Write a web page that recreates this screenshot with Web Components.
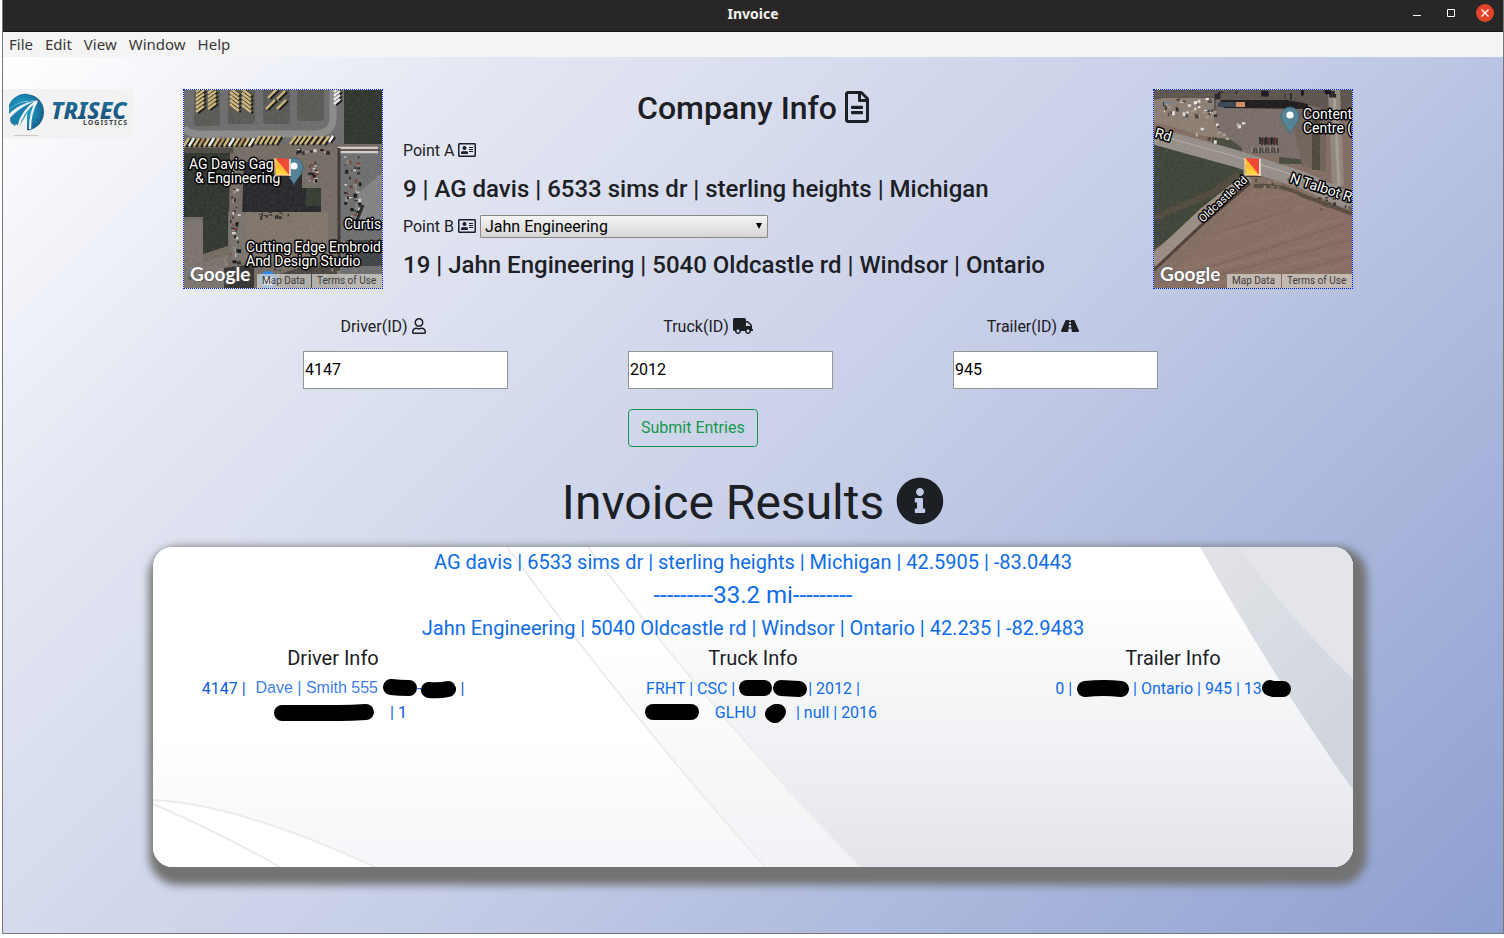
<!DOCTYPE html>
<html lang="en">
<head>
<meta charset="utf-8">
<title>Invoice</title>
<style>
  html, body { margin: 0; background: #fff; }
  body { font: 16px/24px Roboto, sans-serif; color: #1c2024; }
</style>
</head>
<body>
<invoice-app></invoice-app>

<script>
const define = (name, html, after) => {
  const tpl = document.createElement('template');
  tpl.innerHTML = html;
  customElements.define(name, class extends HTMLElement {
    constructor() {
      super();
      this.attachShadow({ mode: 'open' }).append(tpl.content.cloneNode(true));
    }
    connectedCallback() { if (after) after(this, this.shadowRoot); }
  });
};

/* ---------- icons ---------- */
const ICONS = {
  file: [384, 'M288 248v28c0 6.600-5.400 12-12 12H108c-6.600 0-12-5.400-12-12v-28c0-6.600 5.400-12 12-12h168c6.600 0 12 5.400 12 12zm-12 72H108c-6.600 0-12 5.400-12 12v28c0 6.600 5.400 12 12 12h168c6.600 0 12-5.400 12-12v-28c0-6.600-5.400-12-12-12zm108-188.100V464c0 26.500-21.500 48-48 48H48c-26.500 0-48-21.500-48-48V48C0 21.500 21.500 0 48 0h204.100C264.800 0 277 5.100 286 14.100L369.900 98c9 8.900 14.100 21.200 14.100 33.900zm-128-80V128h76.100L256 51.900zM336 464V176H232c-13.300 0-24-10.700-24-24V48H48v416h288z'],
  card: [576, 'M528 32H48C21.500 32 0 53.500 0 80v352c0 26.500 21.500 48 48 48h480c26.500 0 48-21.500 48-48V80c0-26.500-21.500-48-48-48zm0 400H48V80h480v352zM208 256c35.300 0 64-28.700 64-64s-28.700-64-64-64-64 28.700-64 64 28.700 64 64 64zm-89.600 128h179.200c12.400 0 22.400-8.600 22.400-19.200v-19.200c0-31.800-30.100-57.600-67.200-57.600-10.800 0-18.700 8-44.800 8-26.900 0-33.400-8-44.800-8-37.100 0-67.200 25.800-67.200 57.600v19.200c0 10.600 10 19.200 22.400 19.200zM360 320h112c4.400 0 8-3.600 8-8v-16c0-4.400-3.600-8-8-8H360c-4.400 0-8 3.600-8 8v16c0 4.400 3.600 8 8 8zm0-64h112c4.400 0 8-3.600 8-8v-16c0-4.400-3.600-8-8-8H360c-4.400 0-8 3.600-8 8v16c0 4.400 3.600 8 8 8zm0-64h112c4.400 0 8-3.600 8-8v-16c0-4.400-3.600-8-8-8H360c-4.400 0-8 3.600-8 8v16c0 4.400 3.600 8 8 8z'],
  user: [448, 'M313.600 304c-28.700 0-42.500 16-89.600 16-47.100 0-60.800-16-89.600-16C60.200 304 0 364.200 0 438.400V464c0 26.500 21.500 48 48 48h352c26.500 0 48-21.500 48-48v-25.600c0-74.200-60.200-134.400-134.400-134.400zM400 464H48v-25.600c0-47.600 38.800-86.400 86.400-86.400 14.600 0 38.300 16 89.600 16 51.700 0 74.900-16 89.600-16 47.600 0 86.400 38.800 86.400 86.400V464zM224 288c79.500 0 144-64.500 144-144S303.500 0 224 0 80 64.500 80 144s64.500 144 144 144zm0-240c52.900 0 96 43.100 96 96s-43.100 96-96 96-96-43.100-96-96 43.100-96 96-96z'],
  truck: [640, 'M624 352h-16V243.900c0-12.700-5.100-24.900-14.100-33.900L494 110.100c-9-9-21.200-14.100-33.900-14.100H416V48c0-26.500-21.500-48-48-48H48C21.500 0 0 21.500 0 48v320c0 26.500 21.500 48 48 48h16c0 53 43 96 96 96s96-43 96-96h128c0 53 43 96 96 96s96-43 96-96h48c8.800 0 16-7.200 16-16v-32c0-8.800-7.200-16-16-16zM160 464c-26.500 0-48-21.500-48-48s21.500-48 48-48 48 21.500 48 48-21.500 48-48 48zm320 0c-26.500 0-48-21.500-48-48s21.500-48 48-48 48 21.500 48 48-21.500 48-48 48zm80-208H416V144h44.100l99.900 99.900V256z'],
  road: [576, 'M573.190 402.670l-139.790-320C428.430 71.290 417.600 64 405.680 64h-97.450l2.450 23.160c.5 4.720-3.210 8.840-8 8.840h-29.160c-4.790 0-8.490-4.120-7.990-8.840L267.950 64h-97.640c-11.900 0-22.750 7.290-27.720 18.670l-139.780 320C-6.480 423.810 7.910 448 30.530 448h196.840l10.310-97.680c.86-8.140 7.720-14.320 15.910-14.320h68.800c8.190 0 15.050 6.180 15.910 14.320L348.620 448h196.840c22.620 0 37.010-24.190 27.730-45.330zM260.400 135.160a8 8 0 0 1 7.960-7.160h39.290c4.090 0 7.530 3.090 7.960 7.160l4.600 43.580c.75 7.090-4.810 13.260-11.930 13.260h-40.540c-7.130 0-12.680-6.170-11.930-13.260l4.590-43.580zM315.640 304h-55.290c-9.500 0-16.910-8.230-15.910-17.680l5.070-48c.86-8.140 7.720-14.320 15.910-14.320h45.150c8.190 0 15.050 6.180 15.910 14.320l5.070 48c1 9.450-6.410 17.680-15.910 17.680z'],
  info: [512, 'M256 8C119.043 8 8 119.083 8 256c0 136.997 111.043 248 248 248s248-111.003 248-248C504 119.083 392.957 8 256 8zm0 110c23.196 0 42 18.804 42 42s-18.804 42-42 42-42-18.804-42-42 18.804-42 42-42zm56 254c0 6.627-5.373 12-12 12h-88c-6.627 0-12-5.373-12-12v-24c0-6.627 5.373-12 12-12h12v-64h-12c-6.627 0-12-5.373-12-12v-24c0-6.627 5.373-12 12-12h64c6.627 0 12 5.373 12 12v100h12c6.627 0 12 5.373 12 12v24z']
};
define('fa-icon', `<style>
  :host { display: inline-block; height: 1em; vertical-align: -0.125em; line-height: 1; }
  svg { display: block; height: 1em; fill: currentColor; }
</style><svg aria-hidden="true"><path/></svg>`, (el, root) => {
  const [w, d] = ICONS[el.getAttribute('name')];
  root.querySelector('svg').setAttribute('viewBox', `0 0 ${w} 512`);
  root.querySelector('path').setAttribute('d', d);
});

/* ---------- window chrome ---------- */
define('title-bar', `<style>
  :host { display: grid; grid-template-columns: 1fr auto 1fr; align-items: center; height: 31px; background: #282627; border-bottom: 1px solid #161515; color: #fff; }
  b { grid-column: 2; font: 700 14px/28px "Noto Sans", sans-serif; padding-bottom: 3px; color: #f4f2ee; }
  div { display: flex; justify-content: flex-end; gap: 16px; padding: 0 9px 6px 0; }
  button { width: 18px; height: 18px; padding: 0; border: 0; background: none; border-radius: 9px; }
  .close { background: #e2432a; }
  svg { display: block; }
</style>
<b>Invoice</b>
<div>
  <button aria-label="Minimize"><svg width="18" height="18"><path d="M5 11.500h8" stroke="#fff"/></svg></button>
  <button aria-label="Maximize"><svg width="18" height="18"><path d="M5.500 5.500h7v7h-7z" fill="none" stroke="#fff"/></svg></button>
  <button class="close" aria-label="Close"><svg width="18" height="18"><path d="M5.500 5.500l7 7m0-7l-7 7" stroke="#fff" stroke-width="1.300"/></svg></button>
</div>`);

define('menu-bar', `<style>
  :host { display: block; background: #f4f4f4; }
  nav { display: flex; gap: 12px; padding: 0 6px; height: 25px; }
  button { border: 0; background: none; padding: 0; font: 15px/25px "Noto Sans", sans-serif; color: #3a3836; }
</style><nav><button>File</button><button>Edit</button><button>View</button><button>Window</button><button>Help</button></nav>`);

define('trisec-logo', `<style>
  :host { display: block; width: 130px; height: 50px; flex: none; background: #f2f2f2; }
  svg { display: block; }
</style>
<svg width="130" height="50" viewBox="0 0 130 50" role="img" aria-label="Trisec Logistics">
  <defs>
    <radialGradient id="g" cx="40%" cy="45%" r="65%"><stop offset="0" stop-color="#2bb0d2"/><stop offset=".55" stop-color="#1a86b2"/><stop offset="1" stop-color="#175680"/></radialGradient>
    <linearGradient id="t" x2="0" y2="1"><stop offset="0" stop-color="#1e78a3"/><stop offset="1" stop-color="#17486f"/></linearGradient>
  </defs>
  <path d="M6 16C10 8 17 4 24 5c10 1 17 8 17 18 0 9-6 16-14 18-4 1-8 0-11-2C9 37 6 30 6 23z" fill="url(#g)"/>
  <path d="M3 22C13 14 22 11 33 12 21 16 12 22 3 34z" fill="#f2f2f2"/>
  <path d="M6 20C14 14 22 12 31 12 20 14 12 19 6 25z" fill="#1a86b2"/>
  <path d="M3 36L8 30 16 38 24 24 24 42 8 43z" fill="#f2f2f2"/>
  <path d="M7 31C14 22 22 16 33 12 24 18 17 26 12 37l-4-3z" fill="#1d7ea9"/>
  <path d="M34 12C24 18 18 26 15 39M34 12C29 20 27 29 27 40" fill="none" stroke="#f2f2f2" stroke-width="2.200"/>
  <path d="M11 46.500h24" stroke="#c9c9c9"/>
  <text x="48" y="30" font-family="Noto Sans, sans-serif" font-weight="800" font-style="italic" font-size="23" fill="url(#t)">TRISEC</text>
  <text x="80" y="36" font-family="Noto Sans, sans-serif" font-weight="700" font-size="7" letter-spacing="1" fill="#444">LOGISTICS</text>
</svg>`);

/* ---------- satellite maps ---------- */
const bar = (x, y, dx, dy, c, w = 2.4) =>
  `<path d="M${x + 2} ${y + 1}l${dx} ${dy}" stroke="#15140f" stroke-width="${w}"/><path d="M${x} ${y}l${dx} ${dy}" stroke="${c}" stroke-width="${w}"/>`;
const row = (n, x, y, sx, sy, dx, dy, c, w) =>
  Array.from({ length: n }, (_, i) => bar(x + i * sx, y + i * sy, dx, dy, Array.isArray(c) ? c[i % c.length] : c, w)).join('');
let seed = 7;
const rnd = () => (seed = (seed * 16807) % 2147483647) / 2147483647;
const specks = (n, x, y, w, h, cols, s = 3) =>
  Array.from({ length: n }, () => `<rect x="${(x + rnd() * w).toFixed(1)}" y="${(y + rnd() * h).toFixed(1)}" width="${(1 + rnd() * s).toFixed(1)}" height="${(1 + rnd() * s).toFixed(1)}" fill="${cols[Math.floor(rnd() * cols.length)]}"/>`).join('');
const tan = '#cfb679', cars = ['#1d1c1b', '#d6d2cb', '#2d2b2a', '#8d8a86', '#7c3c33', '#111'];
const pin = (x, y) => `<path d="M${x} ${y + 18}c-2-6-9-10-9-18a9 9 0 0 1 18 0c0 8-7 12-9 18z" fill="#568497" stroke="#35606f" stroke-width=".6"/><circle cx="${x}" cy="${y - 1}" r="3.600" fill="#fff"/>`;
const flag = `<path d="M91 69h16v18H92z" fill="#222" opacity=".7"/><path d="M91 68l15 1v17l-14-1z" fill="#ef4a35"/><path d="M91 68l14 17-13 0z" fill="#ffd43c"/><path d="M91 68l13 15-12-5z" fill="#ffad2e" opacity=".6"/><path d="M106 69v17" stroke="#fff" stroke-width="1.500"/><path d="M91 85h15M91 68v17" stroke="#ffe9b0" stroke-width="1"/>`;
const SCENES = {
  a: () => `<rect width="198" height="198" fill="#6f685e"/>
    <path d="M160 0h38v54H160zM0 60h46l-1 67H0z" fill="#2a3028"/><path d="M0 0h160v54H0z" fill="#6b6a6a"/>
    <path d="M0 38Q6 45 20 44h110q17 0 19-14V0" fill="none" stroke="#8a8988" stroke-width="7"/>
    <g fill="#565552"><rect x="10" y="-4" width="26" height="40" rx="3"/><rect x="44" y="-4" width="27" height="38" rx="3"/><rect x="79" y="-4" width="27" height="38" rx="3"/><rect x="113" y="-4" width="27" height="35" rx="4"/></g>
    ${row(6, 12, 2, 0, 4, 8, -6, tan)}${row(5, 24, 3, 0, 4, 8, -6, tan)}${row(5, 46, -2, 0, 4, 9, 7, tan)}${row(5, 58, -1, 0, 4, 9, 7, tan)}
    ${bar(84, 8, 9, -9, tan)}${bar(82, 19, 9, -9, tan)}${bar(93, 19, 9, -9, tan)}${bar(93, 9, 8, -8, tan)}
    ${row(4, 150, 2, 0, 4, 6, -5, '#eee')}
    <path d="M0 58h150v5H0z" fill="#4a4640"/>
    ${row(14, 0, 56, 5, 0, 5, -8, [tan, '#eee', tan, '#a98e5c'])}${row(5, 71, 54, 5, 0, 5, -8, tan)}${row(4, 106, 54, 5, 0, 6, -8, tan)}${row(3, 127, 54, 6, 0, 6, -8, tan)}${bar(145, 52, 4, -6, '#fff')}
    <path d="M50 57h110v141H46V80z" fill="#726a61"/><path d="M60 72h58v26h19v24H58z" fill="#222126"/><path d="M122 98h15v18h-15z" fill="#2f382d"/>
    <path d="M60 122h84v50H62z" fill="#7d7266"/><path d="M44 122h18v50H48z" fill="#77706a"/>
    <path d="M0 131q18-5 19 4v38l25-9v34H0z" fill="#78716a"/>
    <path d="M19 126h25v30l-25 8z" fill="#2c322a"/>
    <path d="M156 56h42v142h-42z" fill="#6c6b6b"/><path d="M162 150h36v26h-36z" fill="#3c3f42"/><path d="M172 105l26-22v50l-28 5z" fill="#808181"/>
    <path d="M154 58h40M156 62h38" stroke="#d6cfc7" stroke-width="2.500"/><path d="M154 60h42" stroke="#35211f"/>
    <path d="M155 58v120" stroke="#39332f" stroke-width="3"/><path d="M120 176h36v22h-60v-14z" fill="#47423d"/><path d="M40 178l30-4v24H40z" fill="#312d2d"/>
    ${specks(40, 46, 62, 8, 110, cars)}${specks(45, 160, 66, 15, 60, cars)}${specks(20, 112, 58, 35, 4, cars)}${specks(20, 122, 70, 10, 20, cars)}${specks(16, 70, 121, 34, 6, ['#222', '#2c2a29'])}${specks(20, 80, 178, 110, 16, ['#302d2b', '#847b71', '#222'])}${specks(20, 0, 168, 42, 26, ['#8a837a', '#514b45'])}
    <path d="M171 135l8-20" stroke="#222" stroke-width="3"/>
    <rect width="198" height="198" filter="url(#n)" opacity=".14"/>
    <circle cx="84" cy="190" r="9" fill="#2b8be8"/><rect x="79" y="187" width="10" height="8" fill="#fff"/>
    ${pin(110, 77)}
    <g class="l"><text x="5" y="79">AG Davis Gag</text><text x="11" y="93">&amp; Engineering</text><text x="160" y="139">Curtis</text><text x="62" y="162">Cutting Edge Embroid</text><text x="62" y="176">And Design Studio</text></g>${flag}`,
  b: () => `<rect width="198" height="198" fill="#806a5f"/>
    <path d="M0 50L90 76 88 92 0 160z" fill="#3b4034"/><path d="M58 40h30v24H58zM125 52h28v22h-28z" fill="#43483a"/>
    <path d="M0 0h198v20H0z" fill="#5a504a"/><path d="M10 8h50v26l50 20-60-8L0 32V10z" fill="#8b7c70"/>
    <path d="M62 10h74l36 10v52L96 64 64 40z" fill="#776b66"/><path d="M66 10h68l20 4v5L70 18z" fill="#1b1718"/><path d="M64 12h26v5H64z" fill="#33404f"/><path d="M82 12h9v5h-9z" fill="#d48a5c"/>
    <path d="M136 20h36v62l-24-6z" fill="#6d6057"/><path d="M158 20h8v60h-8z" fill="#4b4438"/>
    <path d="M180 0l4 96" stroke="#8f847a" stroke-width="12"/><path d="M180 0l5 96" stroke="#a59b93" stroke-width="3"/>
    <path d="M0 46L80 68 148 90l50 22" fill="none" stroke="#948d87" stroke-width="17"/><path d="M0 44L80 66 148 88l50 20" fill="none" stroke="#b0aaa5" stroke-width="1.200"/>
    <path d="M-2 172L50 123l45-36" fill="none" stroke="#978c82" stroke-width="11"/><path d="M0 180L52 131l44-38" fill="none" stroke="#4c3b32" stroke-width="3"/>
    <path d="M0 128L60 102 84 84" fill="none" stroke="#5e4b40" stroke-width="6" opacity=".6"/>
    <path d="M4 198L96 98l46 0 56 26v74z" fill="#866b5f"/>
    <g stroke="#9a8173" stroke-width="3" opacity=".22"><path d="M30 178L190 128M20 190L196 144M60 150L150 116M50 196L196 160M110 196L198 172M90 112L140 104M60 170l110-40"/></g>
    <g stroke="#5f4b42" stroke-width="2" opacity=".22"><path d="M40 182L190 134M70 140L140 120M30 194L196 150M84 196L198 166"/></g>
    <path d="M100 96q30-2 50 10l48 18" fill="none" stroke="#403a2d" stroke-width="4" opacity=".7"/>
    ${specks(60, 8, 8, 54, 18, ['#ddd8d0', '#eee', '#4a3c35', '#222', '#a29382', '#77848c'])}${specks(14, 30, 30, 60, 22, ['#ddd', '#4b3c36', '#b9ad9f'])}
    ${specks(14, 60, 0, 120, 4, ['#111', '#262221'], 6)}${row(6, 106, 54, 3, 0, 0, -7, ['#111', '#5a2326'], 1.4)}${row(9, 98, 62, 3, 0, 0, -5, ['#998', '#554'], 1)}
    ${specks(24, 100, 88, 60, 10, ['#4b443a', '#8b7f72'])}${specks(20, 160, 104, 38, 16, ['#37352a', '#5a5044'])}
    <rect width="198" height="198" filter="url(#n)" opacity=".12"/>
    ${pin(136, 26)}
    <g class="l"><text x="149" y="29">Content</text><text x="149" y="43">Centre (</text>
    <text transform="translate(0 47) rotate(16)">Rd</text><text transform="translate(135 92) rotate(18)">N Talbot R</text><text class="s" transform="translate(49 133) rotate(-43)">Oldcastle Rd</text></g>${flag}`
};
define('sat-map', `<style>
  :host { display: block; flex: none; }
  a { display: block; width: 198px; height: 198px; border: 1px dotted #0018ff; overflow: hidden; }
  svg { display: block; }
  .l text { font: 14px Roboto, sans-serif; fill: #fff; stroke: #000; stroke-width: 3px; stroke-linejoin: round; paint-order: stroke; }
  .l .s { font-size: 11px; }
  .logo { font: 700 19px Lato, sans-serif; fill: #fff; stroke: #555; stroke-width: 1px; paint-order: stroke; }
  .c { font: 10px Roboto, sans-serif; fill: #3c3a38; }
</style>
<a href="#map"><svg width="198" height="198" viewBox="0 0 198 198">
  <defs><filter id="n"><feTurbulence type="fractalNoise" baseFrequency=".35" numOctaves="3"/><feColorMatrix type="saturate" values="0"/></filter></defs>
  <g id="scene"></g>
  <text class="logo" x="6" y="191">Google</text>
  <path d="M73 184h54v14H73zM128 184h70v14h-70z" fill="#d8d5d0" opacity=".72"/>
  <text class="c" x="78" y="194">Map Data</text><text class="c" x="133" y="194">Terms of Use</text>
</svg></a>`, (el, root) => {
  root.querySelector('#scene').innerHTML = SCENES[el.getAttribute('scene')]();
  root.querySelector('a').setAttribute('aria-label', el.getAttribute('label'));
});

/* ---------- company section ---------- */
define('company-info', `<style>
  :host { display: flex; flex-direction: column; gap: 11px; flex: 1; min-width: 0; }
  h2, h4 { margin: 0; font-weight: 500; white-space: nowrap; }
  h2 { font-size: 32px; line-height: 39px; text-align: center; }
  h4 { font-size: 24px; line-height: 30px; }
  .row { display: flex; align-items: flex-start; gap: 4px; height: 24px; }
  .pick { position: relative; width: 288px; }
  select { display: block; width: 100%; height: 23px; padding: 0 4px; appearance: none; border: 1px solid #8a8785; border-radius: 1px;
    background: linear-gradient(#f4f4f4, #d6d6d6); font: 16px/21px Roboto, sans-serif; color: #000; }
  .pick svg { position: absolute; right: 6px; top: 8px; pointer-events: none; }
</style>
<h2>Company Info <fa-icon name="file"></fa-icon></h2>
<div class="row"><span>Point A <fa-icon name="card"></fa-icon></span></div>
<h4>9 | AG davis | 6533 sims dr | sterling heights | Michigan</h4>
<div class="row"><label for="pb">Point B <fa-icon name="card"></fa-icon></label>
  <span class="pick"><select id="pb"><option>Jahn Engineering</option></select><svg width="6" height="6"><path d="M0 0h6L3 6z"/></svg></span></div>
<h4>19 | Jahn Engineering | 5040 Oldcastle rd | Windsor | Ontario</h4>`);

define('id-field', `<style>
  :host { display: block; }
  label { display: block; width: 160px; text-align: center; margin-bottom: 12px; white-space: nowrap; }
  input { display: block; box-sizing: border-box; width: 205px; height: 38px; padding: 0 1px 2px; border: 1px solid #949494; border-radius: 0; background: #fff; font: 16px/24px Roboto, sans-serif; color: #000; }
</style>
<label for="i"><slot></slot></label><input id="i" type="text">`, (el, root) => {
  const input = root.querySelector('input');
  input.value = el.getAttribute('value');
  input.setAttribute('aria-label', el.textContent.trim());
});

define('entry-form', `<style>
  :host { display: block; margin: 26px 225px 0 300px; }
  form { display: grid; grid-template-columns: repeat(3, 1fr); row-gap: 20px; }
  button { grid-column: 2; justify-self: start; height: 38px; padding: 0 12px; border: 1px solid #15994b; border-radius: 4px; background: none; color: #15994b; font: 16px/24px Roboto, sans-serif; }
</style>
<form>
  <id-field value="4147">Driver(ID) <fa-icon name="user"></fa-icon></id-field>
  <id-field value="2012">Truck(ID) <fa-icon name="truck"></fa-icon></id-field>
  <id-field value="945">Trailer(ID) <fa-icon name="road"></fa-icon></id-field>
  <button type="button">Submit Entries</button>
</form>`);

/* ---------- results ---------- */
define('marker-stroke', `<style>
  :host { display: inline-block; vertical-align: middle; }
  svg { display: block; }
  path { fill: none; stroke: #000; stroke-width: 16; stroke-linecap: round; stroke-linejoin: round; }
</style><svg height="20"><path/></svg>`, (el, root) => {
  root.querySelector('svg').setAttribute('width', el.getAttribute('w'));
  root.querySelector('path').setAttribute('d', el.getAttribute('d'));
});

define('info-column', `<style>
  :host { display: block; flex: 1; text-align: center; }
  h5 { margin: 0 0 4px; font-size: 20px; line-height: 30px; font-weight: 400; color: #1c2024; }
</style><h5><slot name="title"></slot></h5><slot></slot>`);

define('invoice-card', `<style>
  :host { display: block; position: relative; margin: 14px 150px 0; min-height: 320px; border-radius: 20px; box-shadow: 5px 9px 8px 9px #737373; background: #fff; color: #0d6cea; text-align: center; overflow: hidden; }
  .bg { position: absolute; inset: 0; width: 100%; height: 100%; }
  .body { position: relative; }
  p { margin: 0; font-size: 20px; line-height: 30px; }
  .mi { font-size: 24px; line-height: 36px; }
  .cols { display: flex; gap: 60px; }
  .line { display: flex; justify-content: center; align-items: center; height: 24px; white-space: pre; }
  .driver { color: #0a5be0; }
  .typed { font-family: "Liberation Sans", sans-serif; color: #3f7fe6; padding: 0 5px 2px 10px; }
</style>
<svg class="bg" viewBox="0 0 1200 320" preserveAspectRatio="none" aria-hidden="true">
  <defs>
    <linearGradient id="a" x2="0" y2="1"><stop offset=".15" stop-color="#fff"/><stop offset=".5" stop-color="#f4f5f7"/><stop offset="1" stop-color="#e3e5ea"/></linearGradient>
    <linearGradient id="b" x2="0" y2="1"><stop offset=".3" stop-color="#fff"/><stop offset="1" stop-color="#f1f2f5"/></linearGradient>
    <linearGradient id="c" x2="0" y2="1"><stop offset=".6" stop-color="#fff"/><stop offset="1" stop-color="#f5f6f9"/></linearGradient>
    <linearGradient id="d" x2=".6" y2="1"><stop offset="0" stop-color="#e2e3e7"/><stop offset="1" stop-color="#d0d5dd"/></linearGradient>
  </defs>
  <path d="M0 0h1200v320H0z" fill="url(#c)"/>
  <path d="M354 0Q480 172 612 320H1200V0z" fill="url(#b)"/>
  <path d="M435 0Q550 155 707 320H1200V0z" fill="url(#a)"/>
  <path d="M0 253Q85 257 222 320H0z" fill="#fff"/>
  <path d="M1047 0Q1120 130 1200 243V0z" fill="url(#d)"/>
  <path d="M1085 0Q1140 75 1200 132V0z" fill="#e4e5e9"/>
  <g fill="none" stroke="#ececed" stroke-width="2"><path d="M354 0Q480 172 612 320M435 0Q550 155 707 320M0 253Q85 257 222 320M0 257Q65 285 127 320"/></g>
</svg>
<div class="body">
  <p>AG davis | 6533 sims dr | sterling heights | Michigan | 42.5905 | -83.0443</p>
  <p class="mi">---------33.2 mi---------</p>
  <p>Jahn Engineering | 5040 Oldcastle rd | Windsor | Ontario | 42.235 | -82.9483</p>
  <div class="cols">
    <info-column><span slot="title">Driver Info</span>
      <div class="line driver">4147 |<span class="typed">Dave | Smith 555</span><marker-stroke w="34" d="M8 8Q16 9 26 9"></marker-stroke>-<marker-stroke w="35" d="M8 11Q18 12 27 10"></marker-stroke> |</div>
      <div class="line driver"><marker-stroke w="115" d="M23 10H80Q92 10 107 9"></marker-stroke>    | 1</div>
    </info-column>
    <info-column><span slot="title">Truck Info</span>
      <div class="line">FRHT | CSC | <marker-stroke w="34" d="M8 9h17"></marker-stroke><marker-stroke w="35" d="M8 9l18 1"></marker-stroke>| 2012 |</div>
      <div class="line"><marker-stroke w="70" d="M24 9h38"></marker-stroke>    GLHU  <marker-stroke w="24" d="M9 11l3-2 2 0-3 3z"></marker-stroke>  | null | 2016</div>
    </info-column>
    <info-column><span slot="title">Trailer Info</span>
      <div class="line">0 | <marker-stroke w="53" d="M9 10Q28 8 45 10"></marker-stroke> | Ontario | 945 | 13<marker-stroke w="29" d="M8 9l3 1h10"></marker-stroke></div>
    </info-column>
  </div>
</div>`);

define('invoice-app', `<style>
  :host { display: flex; flex-direction: column; box-sizing: border-box; min-height: calc(100vh - 4px); margin-left: 2px; border: solid #777; border-width: 0 1px 1px; }
  main { flex: 1; padding: 32px 0 64px; background: linear-gradient(135deg, #fff, #e5e8f3 20%, #c5cde7 54%, #8d9fd0); }
  .top { display: flex; padding-right: 150px; }
  company-info { margin: 0 50px 0 20px; }
  .first { margin-left: 50px; }
  h1 { margin: 26px 0 0; font-size: 48px; line-height: 60px; font-weight: 400; text-align: center; }
</style>
<title-bar></title-bar>
<menu-bar></menu-bar>
<main>
  <div class="top">
    <trisec-logo></trisec-logo>
    <sat-map class="first" scene="a" label="Map of AG davis"></sat-map>
    <company-info></company-info>
    <sat-map scene="b" label="Map of Jahn Engineering"></sat-map>
  </div>
  <entry-form></entry-form>
  <h1>Invoice Results <fa-icon name="info"></fa-icon></h1>
  <invoice-card></invoice-card>
</main>`);
</script>
</body>
</html>
